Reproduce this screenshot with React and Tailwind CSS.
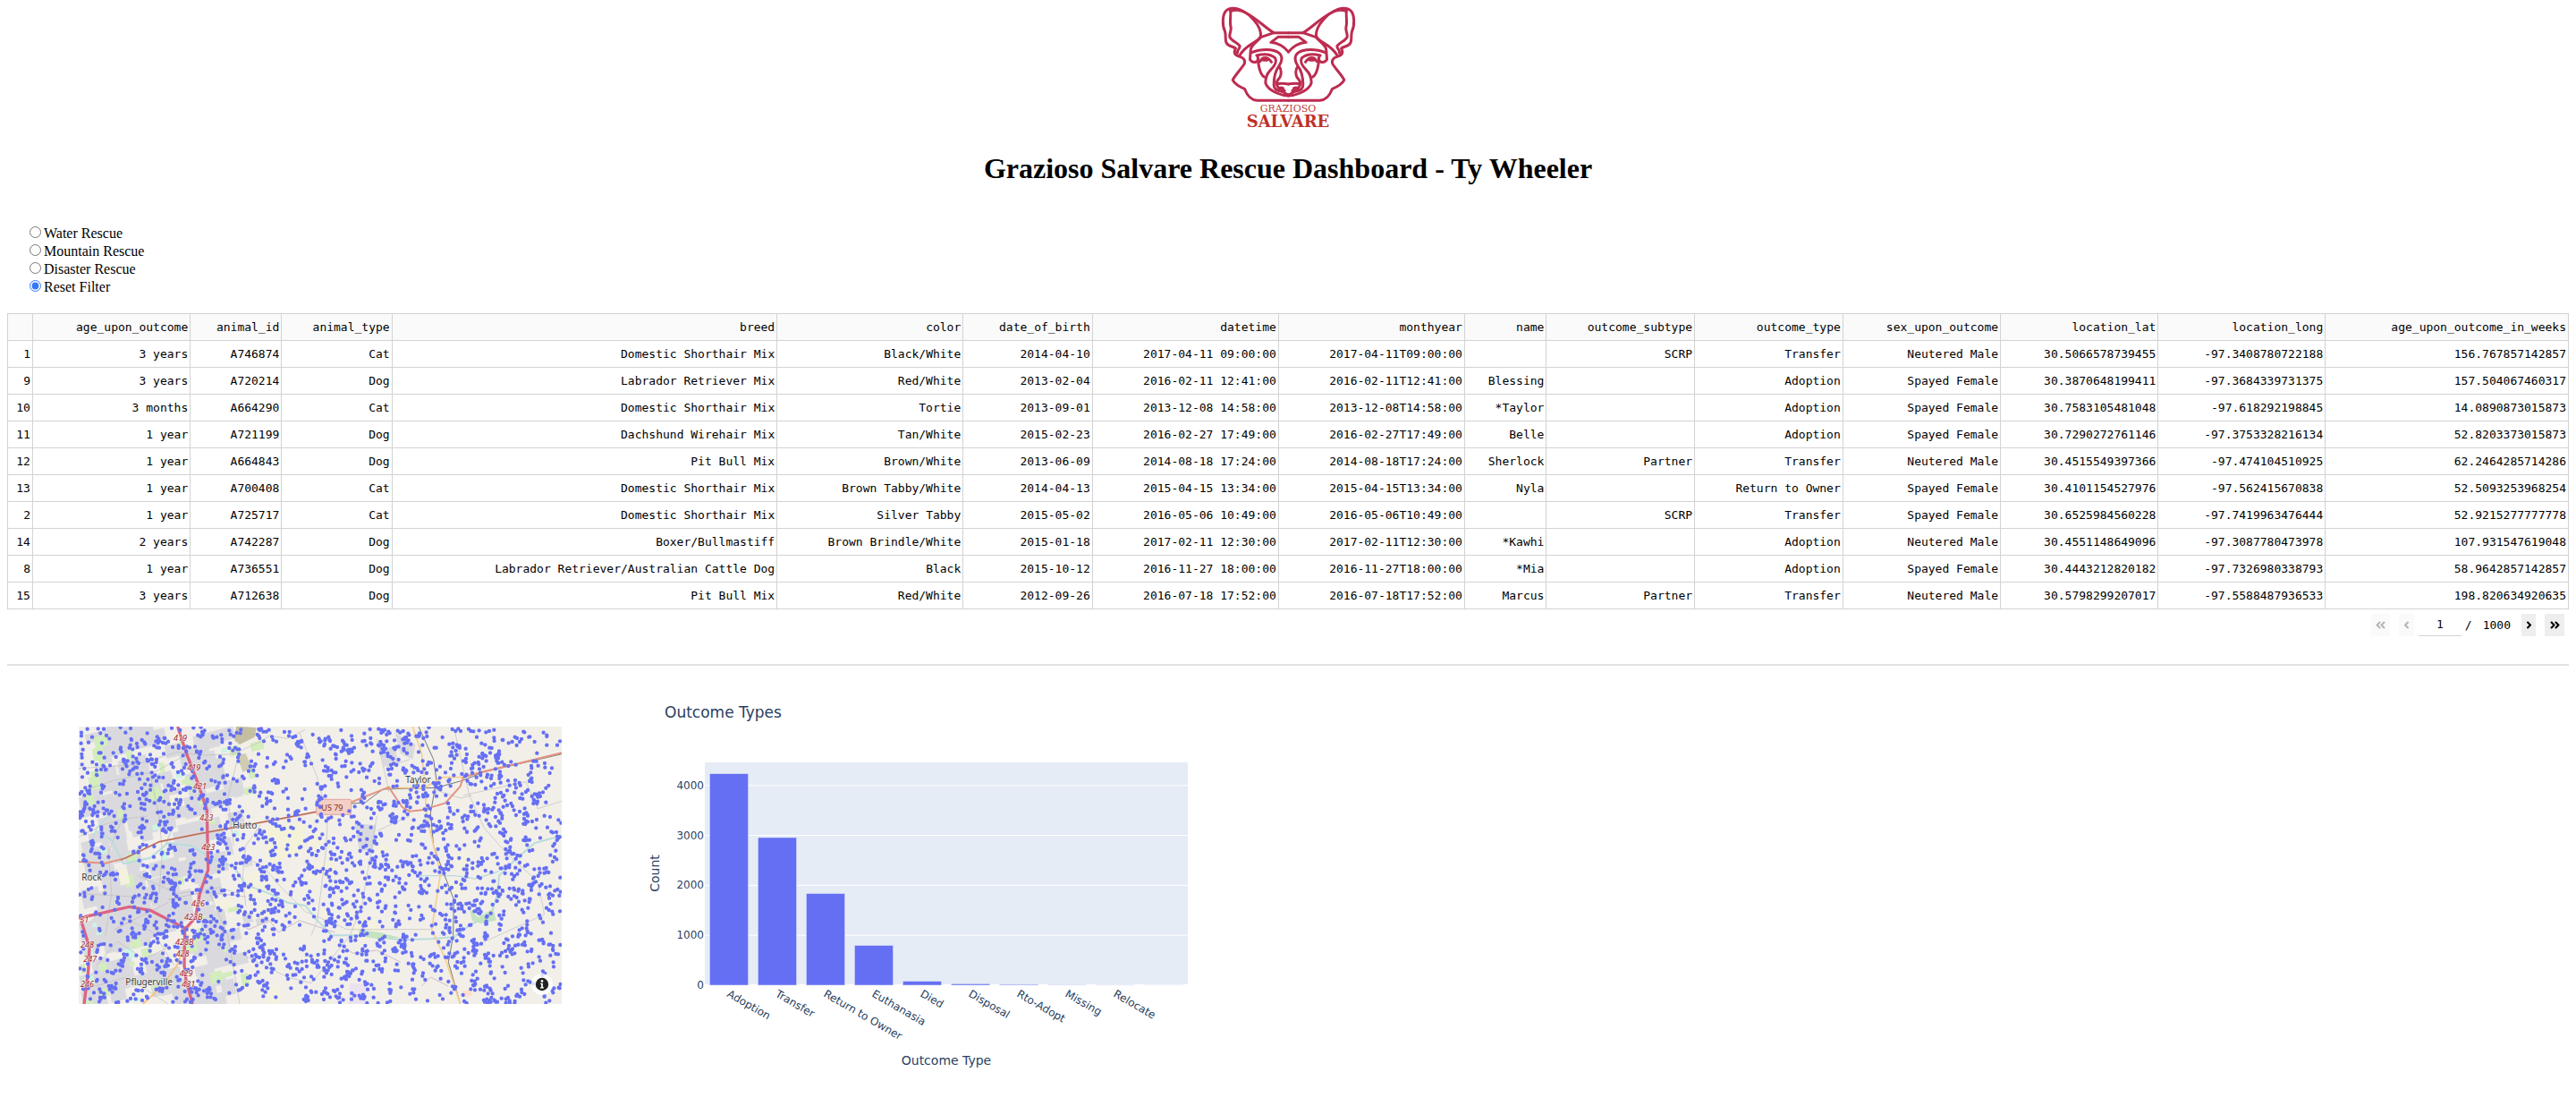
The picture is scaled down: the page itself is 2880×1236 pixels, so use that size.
import { useState } from "react";
import {
  FaAngleDoubleLeft,
  FaAngleLeft,
  FaAngleRight,
  FaAngleDoubleRight,
} from "react-icons/fa";

const FILTERS = ["Water Rescue", "Mountain Rescue", "Disaster Rescue", "Reset Filter"];

const COLUMNS = [
  "", "age_upon_outcome", "animal_id", "animal_type", "breed", "color",
  "date_of_birth", "datetime", "monthyear", "name", "outcome_subtype",
  "outcome_type", "sex_upon_outcome", "location_lat", "location_long",
  "age_upon_outcome_in_weeks",
];

const ROWS = [
  ["1", "3 years", "A746874", "Cat", "Domestic Shorthair Mix", "Black/White", "2014-04-10", "2017-04-11 09:00:00", "2017-04-11T09:00:00", "", "SCRP", "Transfer", "Neutered Male", "30.5066578739455", "-97.3408780722188", "156.767857142857"],
  ["9", "3 years", "A720214", "Dog", "Labrador Retriever Mix", "Red/White", "2013-02-04", "2016-02-11 12:41:00", "2016-02-11T12:41:00", "Blessing", "", "Adoption", "Spayed Female", "30.3870648199411", "-97.3684339731375", "157.504067460317"],
  ["10", "3 months", "A664290", "Cat", "Domestic Shorthair Mix", "Tortie", "2013-09-01", "2013-12-08 14:58:00", "2013-12-08T14:58:00", "*Taylor", "", "Adoption", "Spayed Female", "30.7583105481048", "-97.618292198845", "14.0890873015873"],
  ["11", "1 year", "A721199", "Dog", "Dachshund Wirehair Mix", "Tan/White", "2015-02-23", "2016-02-27 17:49:00", "2016-02-27T17:49:00", "Belle", "", "Adoption", "Spayed Female", "30.7290272761146", "-97.3753328216134", "52.8203373015873"],
  ["12", "1 year", "A664843", "Dog", "Pit Bull Mix", "Brown/White", "2013-06-09", "2014-08-18 17:24:00", "2014-08-18T17:24:00", "Sherlock", "Partner", "Transfer", "Neutered Male", "30.4515549397366", "-97.474104510925", "62.2464285714286"],
  ["13", "1 year", "A700408", "Cat", "Domestic Shorthair Mix", "Brown Tabby/White", "2014-04-13", "2015-04-15 13:34:00", "2015-04-15T13:34:00", "Nyla", "", "Return to Owner", "Spayed Female", "30.4101154527976", "-97.562415670838", "52.5093253968254"],
  ["2", "1 year", "A725717", "Cat", "Domestic Shorthair Mix", "Silver Tabby", "2015-05-02", "2016-05-06 10:49:00", "2016-05-06T10:49:00", "", "SCRP", "Transfer", "Spayed Female", "30.6525984560228", "-97.7419963476444", "52.9215277777778"],
  ["14", "2 years", "A742287", "Dog", "Boxer/Bullmastiff", "Brown Brindle/White", "2015-01-18", "2017-02-11 12:30:00", "2017-02-11T12:30:00", "*Kawhi", "", "Adoption", "Neutered Male", "30.4551148649096", "-97.3087780473978", "107.931547619048"],
  ["8", "1 year", "A736551", "Dog", "Labrador Retriever/Australian Cattle Dog", "Black", "2015-10-12", "2016-11-27 18:00:00", "2016-11-27T18:00:00", "*Mia", "", "Adoption", "Spayed Female", "30.4443212820182", "-97.7326980338793", "58.9642857142857"],
  ["15", "3 years", "A712638", "Dog", "Pit Bull Mix", "Red/White", "2012-09-26", "2016-07-18 17:52:00", "2016-07-18T17:52:00", "Marcus", "Partner", "Transfer", "Neutered Male", "30.5798299207017", "-97.5588487936533", "198.820634920635"],
];

const OUTCOMES = [
  ["Adoption", 4236], ["Transfer", 2957], ["Return to Owner", 1836],
  ["Euthanasia", 797], ["Died", 80], ["Disposal", 28], ["Rto-Adopt", 16],
  ["Missing", 4], ["Relocate", 2], ["", 1],
];

function DogHalf() {
  return (
    <>
      <path d="M246 110 C215 92 190 62 150 42 C125 26 98 22 84 38 C74 52 72 85 82 105 C86 118 82 128 86 142 C92 156 106 154 118 162 C110 176 114 186 132 190 C146 194 152 204 146 216 C134 234 116 252 108 268 C116 284 134 292 148 298 C156 318 166 334 190 337 L295 337" />
      <path d="M100 32 C104 52 96 72 102 92 C104 104 96 112 98 124 C104 138 124 142 132 154 C132 166 122 166 124 178 M100 38 C132 26 160 44 178 66 C194 84 204 106 202 122 C196 134 184 138 174 146 C160 154 142 168 130 188" />
      <path d="M295 110 L246 110 L204 124 C188 142 168 150 168 170 L166 200 C176 214 194 210 194 196" />
      <path d="M295 124 L260 124 L236 142 C260 144 278 154 295 174" />
      <path d="M172 176 C200 164 244 162 264 178 C276 188 274 206 264 220 C250 238 246 262 246 284 C246 300 258 304 270 306 C280 308 286 316 295 318" />
      <path d="M188 186 C212 180 236 182 250 194 C258 206 246 224 234 236 C222 248 218 262 218 278 C222 294 238 304 256 312 C270 318 282 321 295 321" />
      <path d="M192 190 C194 222 200 250 214 258 M200 206 C208 190 226 190 238 208" />
      <path d="M264 224 C272 232 272 250 266 260 C254 272 252 284 260 292 C266 300 276 298 282 304 M256 282 C270 276 284 282 295 282" />
      <ellipse cx="217" cy="198" rx="10" ry="4" fill="#bd2c50" />
      <ellipse cx="270" cy="297" rx="7" ry="3" fill="#bd2c50" />
    </>
  );
}

function Logo() {
  return (
    <div className="flex h-[150px] flex-col items-center font-['DejaVu_Serif',serif] text-[#bf3f3a]">
      <svg viewBox="0 0 590 348" className="h-[116px] w-[197px]" fill="none" stroke="#bd2c50" strokeWidth="9" strokeLinejoin="round" strokeLinecap="round" aria-hidden="true">
        <DogHalf />
        <g transform="translate(590 0) scale(-1 1)">
          <DogHalf />
        </g>
      </svg>
      <span className="text-[11px] leading-3">GRAZIOSO</span>
      <span className="text-lg leading-4 font-bold text-[#bf2f28]">SALVARE</span>
    </div>
  );
}

function Filters() {
  const [active, setActive] = useState("Reset Filter");
  return (
    <fieldset className="mx-6 mt-[43px] mb-[19px] text-base leading-5">
      {FILTERS.map((name) => (
        <label key={name} className="flex w-fit items-center gap-[3px]">
          <input
            type="radio"
            name="rescue"
            checked={active === name}
            onChange={() => setActive(name)}
            className="mb-1 ml-px size-[13px] accent-[#3478f6]"
          />
          {name}
        </label>
      ))}
    </fieldset>
  );
}

function AnimalTable() {
  return (
    <table className="w-full border-collapse font-['DejaVu_Sans_Mono',monospace] text-[13px] leading-[15px]">
      <thead>
        <tr>
          {COLUMNS.map((name) => (
            <th key={name} className="h-[30px] border border-[#d3d3d3] bg-[#fafafa] px-0.5 text-right font-normal whitespace-nowrap">
              {name}
            </th>
          ))}
        </tr>
      </thead>
      <tbody>
        {ROWS.map((row) => (
          <tr key={row[0]}>
            {row.map((value, i) => (
              <td key={COLUMNS[i]} className="h-[30px] border border-[#d3d3d3] px-0.5 text-right whitespace-nowrap">
                {value}
              </td>
            ))}
          </tr>
        ))}
      </tbody>
    </table>
  );
}

function Pager() {
  const [page, setPage] = useState("1");
  return (
    <nav aria-label="Table pages" className="mt-[5px] mr-[5px] flex h-[25px] items-stretch justify-end font-['DejaVu_Sans_Mono',monospace] text-[13px]">
      <button type="button" disabled aria-label="First page" className="mr-2.5 flex w-[21px] items-center justify-center bg-[#fafafa] text-[#b5b5b5]">
        <FaAngleDoubleLeft className="size-[13px]" />
      </button>
      <button type="button" disabled aria-label="Previous page" className="mr-[5px] flex w-[17px] items-center justify-center bg-[#fafafa] text-[#b5b5b5]">
        <FaAngleLeft className="size-[13px]" />
      </button>
      <input
        aria-label="Current page"
        value={page}
        onChange={(e) => setPage(e.target.value)}
        className="w-12 border-b border-[#d3d3d3] text-center"
      />
      <span className="ml-1 flex items-center">/</span>
      <span className="mr-3 ml-3 flex items-center">1000</span>
      <button type="button" aria-label="Next page" className="mr-2.5 flex w-4 items-center justify-center bg-[#eeeeee]">
        <FaAngleRight className="size-[13px]" />
      </button>
      <button type="button" aria-label="Last page" className="flex w-[22px] items-center justify-center bg-[#eeeeee]">
        <FaAngleDoubleRight className="size-[13px]" />
      </button>
    </nav>
  );
}

function makeRandom(seed) {
  let s = seed;
  return () => {
    s = (s * 1664525 + 1013904223) % 4294967296;
    return s / 4294967296;
  };
}

const ROAD_SHIELDS = [
  ["419", 318, 48], ["419", 364, 146], ["421", 384, 210], ["423", 406, 316],
  ["423", 412, 414], ["426", 378, 604], ["423B", 354, 648], ["428B", 324, 732],
  ["428", 326, 772], ["429", 338, 838], ["431", 346, 874], ["51", 4, 658],
  ["248", 6, 740], ["247", 16, 790], ["246", 6, 872],
];

const TOWNS = [
  ["Hutto", 517, 341], ["Taylor", 1096, 188], ["Rock", 10, 517], ["Pflugerville", 157, 866],
];

const KEEP_CLEAR = [
  ...ROAD_SHIELDS.map(([, x, y]) => [x - 2, y - 22, 54, 24]),
  [512, 316, 90, 28], [1091, 162, 94, 32], [5, 492, 78, 30], [152, 840, 170, 34],
  [810, 248, 90, 44], [1535, 840, 48, 48],
];

const dotRandom = makeRandom(77);
const DOTS = (() => {
  const parts = [];
  const add = (x, y) => {
    if (x < 2 || y < 2 || x > 1618 || y > 928) return;
    const blocked = KEEP_CLEAR.some(([a, b, w, h]) => x > a && x < a + w && y > b && y < b + h);
    if (!blocked) parts.push(`M${Math.round(x)} ${Math.round(y)}h0`);
  };
  for (let i = 0; i < 1560; i++) {
    const x = dotRandom() * 1620;
    const y = dotRandom() * 930;
    add(x, y);
    const extra = dotRandom();
    if (extra < 0.56) add(x + (dotRandom() - 0.5) * 30, y + (dotRandom() - 0.5) * 34);
    if (extra < 0.24) add(x + (dotRandom() - 0.5) * 44, y + (dotRandom() - 0.5) * 44);
  }
  return parts.join("");
})();

function makeBlocks(seed, n, maxX, size) {
  const random = makeRandom(seed);
  const out = [];
  for (let i = 0; i < n; i++) {
    const x = Math.round(random() * maxX);
    const y = Math.round(random() * 930);
    const w = Math.round(size * (0.4 + random()));
    const h = Math.round(size * (0.4 + random()));
    out.push(`M${x} ${y}l${w} ${-Math.round(w / 4)}l${Math.round(h / 5)} ${h}l${-w} ${Math.round(w / 4)}z`);
  }
  return out.join("");
}

const LAND_BLOCKS = [
  ["#dadade", makeBlocks(12, 130, 430, 72)],
  ["#dadade", makeBlocks(35, 40, 600, 46)],
  ["#d3edbd", makeBlocks(58, 44, 580, 32)],
  ["#f4f1df", makeBlocks(71, 16, 1300, 60)],
  ["#ccf5e3", makeBlocks(94, 14, 560, 24)],
];

function OutcomeMap() {
  return (
    <div className="relative">
      <svg viewBox="0 0 1620 930" className="h-auto w-full" role="img" aria-label="Map of animal locations">
        <rect width="1620" height="930" fill="#f2efe9" />
        {LAND_BLOCKS.map(([color, d], i) => (
          <path key={i} d={d} fill={color} />
        ))}
        <path d="M545 0L596 4L590 35L540 60L522 46L528 0Z" fill="#c3bfa0" />
        <path d="M530 95L560 90L582 140L550 152Z" fill="#d0ccb2" />
        <path d="M925 325L998 330L985 420L940 412ZM1010 80L1060 64L1072 124L1024 136ZM1060 20L1130 60L1120 110L1078 90Z" fill="#dadade" />
        <path d="M620 340L760 320L748 420L640 460Z" fill="#f4f3d9" />
        <path d="M910 860L965 862L960 930H905Z" fill="#ebe2f0" />
        <path d="M1285 888L1320 878L1318 900L1292 910Z" fill="#ffdfca" />

        <g fill="none" stroke="#bdbdbd" strokeWidth="2">
          <path d="M0 140L190 128L330 86L420 96L520 92L610 50L640 30L700 40L760 10" />
          <path d="M0 220L120 180L260 150L350 100M0 370L80 330L150 310L230 300M150 300L100 420L110 560L90 700" />
          <path d="M740 20L800 170L820 250M835 300L830 410L800 650L780 700M610 330L560 400L550 500L560 600" />
          <path d="M240 160L270 300L280 420L270 560M200 500L330 560L470 540L540 560M0 560L180 570L250 580" />
          <path d="M560 440L620 470L680 540L760 620L900 680L1080 680L1180 680M560 770L700 840L780 860L830 800L910 700L950 600L1000 300" />
          <path d="M1260 10L1310 230L1360 340L1440 430L1540 520L1562 630L1330 735M1290 230L1500 185L1540 275L1620 250M1190 210L1280 240L1320 230" />
          <path d="M60 800L130 720L220 780L300 740M20 880L160 840L300 930M150 640L250 690L320 800M440 560L500 700L540 930" />
          <path d="M1000 40L1030 170L1040 220M1050 130L1110 110M1110 220L1108 300L1000 350M530 120L500 240L520 400" />
        </g>
        <g fill="none" stroke="#b9dcdb" strokeWidth="6" strokeLinejoin="round">
          <path d="M60 350L110 380L150 460L240 440L300 390L380 400L440 440L520 470L560 530L640 560L700 590L760 600L800 650L850 700L920 700L1000 705L1080 715L1180 712L1260 705L1320 660L1380 640L1405 560L1410 500L1460 450L1530 390L1620 366" />
          <path d="M1140 500L1260 500L1330 510L1410 485" strokeWidth="4" />
          <path d="M290 400L310 350L280 320M100 300L60 340L40 400" strokeWidth="4" />
        </g>
        <path d="M940 680L1010 690L1080 708L1000 712L940 700ZM1310 610L1340 640L1390 610L1400 650L1350 660L1320 650Z" fill="#c4e3c0" />
        <path d="M300 580L420 555L560 570M120 680L300 590M540 660L570 680L640 650L670 690L740 650L860 690M880 730L920 760L1000 750L1080 790M1150 870L1180 840L1240 870" fill="none" stroke="#cdbccd" strokeWidth="3" />
        <g fill="none" stroke="#777" strokeWidth="3">
          <path d="M1140 0L1190 110L1200 180L1180 290L1190 400L1258 580L1256 700L1240 790L1280 930" />
          <path d="M880 260L960 255L1020 210L1200 205L1290 180L1360 152L1620 92" />
        </g>
        <path d="M1120 0L1150 90L1160 180L1166 290L1190 400L1214 490L1184 680L1230 780L1280 930M1030 205L1160 205L1220 170L1290 170" fill="none" stroke="#f6cd8f" strokeWidth="5" />
        <path d="M370 700L330 800L280 870L215 930" fill="none" stroke="#f6c583" strokeWidth="6" />
        <path d="M0 453L90 458L160 440L270 386L400 360L520 338L700 305L800 285L910 255L1040 203L1085 270L1110 284L1150 280L1230 256L1280 200L1290 170L1360 150L1480 122L1620 88" fill="none" stroke="#e59380" strokeWidth="6" />
        <path d="M140 448L270 386L400 360L520 338L800 285" fill="none" stroke="#a26a53" strokeWidth="3" />
        <g fill="none" stroke="#dc6482" strokeWidth="10">
          <path d="M332 0L360 86L400 190L430 280L434 480L406 560L392 640L356 680L354 800L360 850L382 930" />
          <path d="M0 642L90 622L170 604L240 616L356 676M8 650L36 740L32 820L18 930" />
        </g>
        <rect x="797" y="244" width="117" height="51" rx="5" fill="#f3cfc6" stroke="#e2a79c" strokeWidth="3" />
        <path d={DOTS} fill="none" stroke="#656ff3" strokeWidth="13" strokeLinecap="round" />
        <g fontFamily="Noto Sans, sans-serif" fontSize="27">
          <g fontStyle="italic" fill="#9b1c2c" stroke="#f7efee" strokeWidth="3" paintOrder="stroke">
            {ROAD_SHIELDS.map(([name, x, y]) => (
              <text key={`${name}-${y}`} x={x} y={y}>{name}</text>
            ))}
          </g>
          <text x="814" y="281" fill="#7c3127">US 79</text>
          <g fill="#3a3a3a" stroke="#f7f5f0" strokeWidth="3" paintOrder="stroke" fontSize="30">
            {TOWNS.map(([name, x, y]) => (
              <text key={name} x={x} y={y}>{name}</text>
            ))}
          </g>
        </g>
      </svg>
      <button type="button" aria-label="Map attribution" className="absolute right-2.5 bottom-2.5 flex size-6 items-center justify-center rounded-full bg-white/80">
        <svg viewBox="0 0 20 20" className="size-[18px]" aria-hidden="true">
          <circle cx="10" cy="10" r="8" fill="#222" />
          <path d="M8 8.5h3v5h1.2v1.5H7.8v-1.5H9V10H8z" fill="#fff" />
          <circle cx="10" cy="6" r="1.5" fill="#fff" />
        </svg>
      </button>
    </div>
  );
}

function OutcomeChart() {
  const zero = 349;
  const unit = 0.0558;
  return (
    <svg viewBox="0 0 700 450" className="h-auto w-full" fontFamily="Verdana, DejaVu Sans, sans-serif" fill="#2a3f5f" fontSize="12">
      <text x="35" y="50" fontSize="17">Outcome Types</text>
      <rect x="80" y="100" width="540" height="249" fill="#e5ecf6" />
      {[0, 1000, 2000, 3000, 4000].map((tick) => (
        <g key={tick}>
          <line x1="80" x2="620" y1={zero - tick * unit} y2={zero - tick * unit} stroke="white" strokeWidth={tick ? 1 : 2} />
          <text x="79" y={zero + 4 - tick * unit} textAnchor="end">{tick}</text>
        </g>
      ))}
      {OUTCOMES.map(([name, count], i) => {
        const left = 85.4 + i * 54;
        const labelX = 104 + i * 54;
        return (
          <g key={i}>
            <rect x={left} y={zero - count * unit} width="43.2" height={count * unit} fill="#656ff3" stroke="#e5ecf6" strokeWidth="0.5" />
            <text x={labelX} y="361" transform={`rotate(30 ${labelX} 361)`}>{name}</text>
          </g>
        );
      })}
      <text x="350" y="438" fontSize="14" textAnchor="middle">Outcome Type</text>
      <text x="29" y="224" fontSize="14" textAnchor="middle" transform="rotate(-90 29 224)">Count</text>
    </svg>
  );
}

export default function App() {
  return (
    <main className="min-h-screen bg-white px-2 font-['Liberation_Serif',serif] text-black">
      <Logo />
      <h1 className="mt-[18px] text-center text-[32px] leading-10 font-bold">
        Grazioso Salvare Rescue Dashboard - Ty Wheeler
      </h1>
      <Filters />
      <AnimalTable />
      <Pager />
      <hr className="mt-[31px] border-t-2 border-[#e2e2e2]" />
      <section className="mt-2 flex items-start">
        <div className="w-[700px] px-20 pt-[60px]">
          <OutcomeMap />
        </div>
        <div className="w-[700px]">
          <OutcomeChart />
        </div>
      </section>
    </main>
  );
}
